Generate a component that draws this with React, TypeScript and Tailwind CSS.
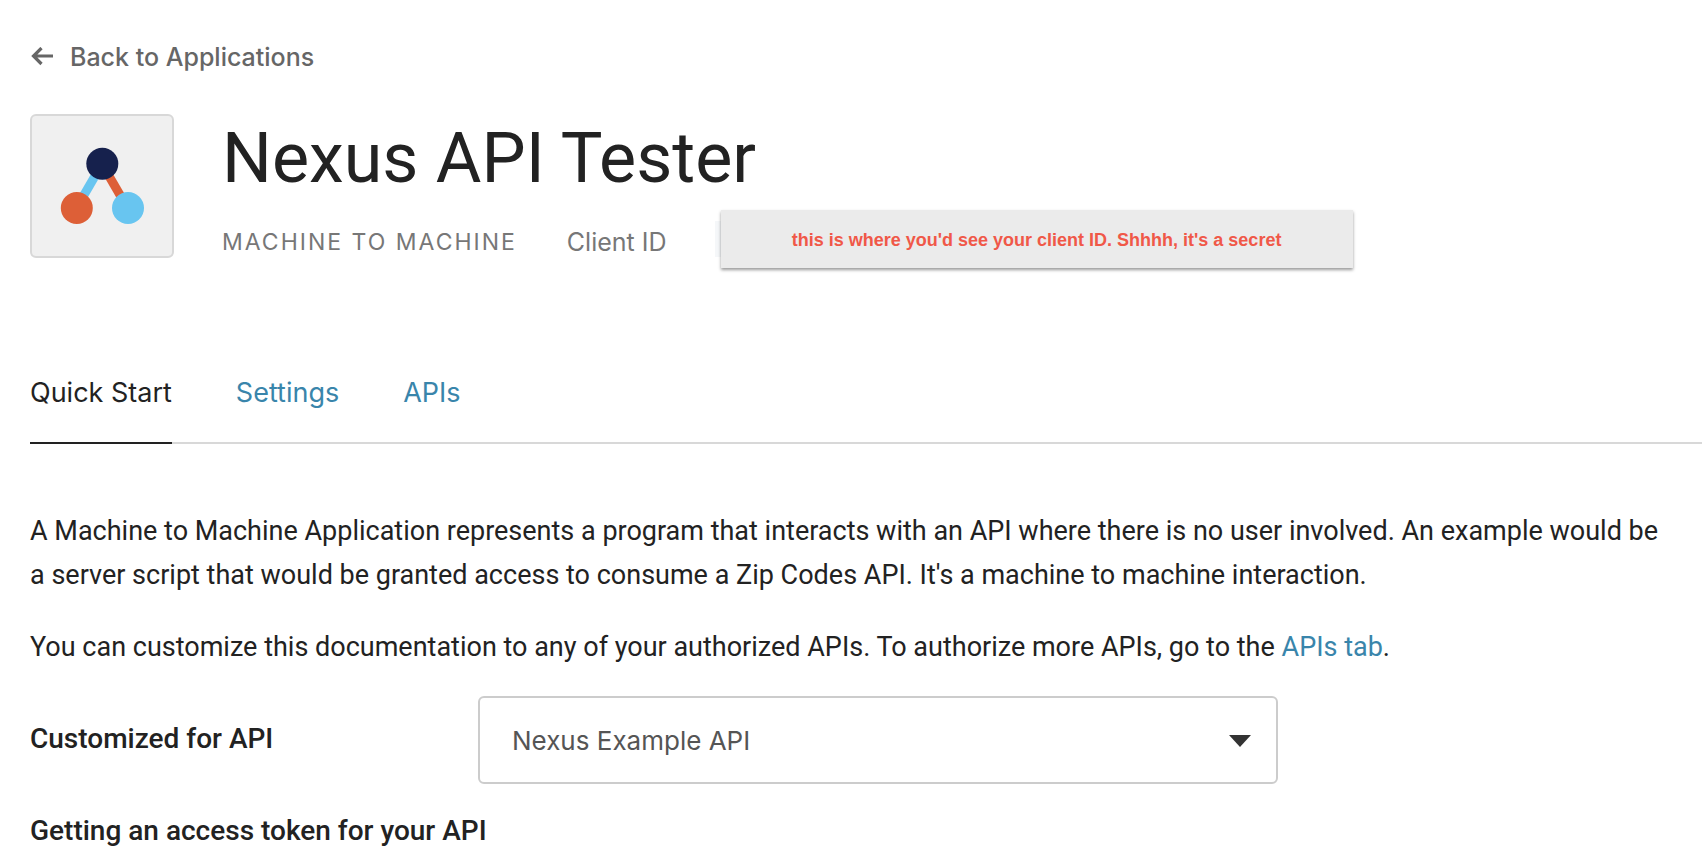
import React from "react";

const tabs = [
  { label: "Quick Start", href: "#quick-start", active: true },
  { label: "Settings", href: "#settings", active: false },
  { label: "APIs", href: "#apis", active: false },
];

function BackArrow() {
  return (
    <svg viewBox="0 0 24 20" className="h-5 w-6" fill="none" stroke="currentColor" strokeWidth="3.2" aria-hidden="true">
      <path d="M23 9H3.500M11.500 1L3.500 9L11.500 17" />
    </svg>
  );
}

function MachineLogo() {
  return (
    <svg viewBox="2 2 140 140" className="size-full" aria-hidden="true">
      <path d="M72 50L47 93" stroke="#68c5f0" strokeWidth="9" />
      <path d="M72 50L97 93" stroke="#dd5f37" strokeWidth="9" />
      <circle cx="72.300" cy="49.800" r="16" fill="#16214d" />
      <circle cx="46.800" cy="94" r="16" fill="#dd5f37" />
      <circle cx="98" cy="94" r="16" fill="#68c5f0" />
    </svg>
  );
}

export default function App() {
  return (
    <main className="min-h-screen bg-white pt-9 pb-1 pl-[30px] font-['Inter',sans-serif] text-[27px] leading-[44px] text-[#222]">
      <a href="#applications" className="flex w-fit items-center gap-4 text-[25px] leading-[42px] font-medium text-[#666]">
        <BackArrow />
        Back to Applications
      </a>

      <header className="mt-9 flex gap-12">
        <div className="size-36 shrink-0 overflow-hidden rounded-md border-2 border-[#d8d8d8] bg-[#f0f0f0]">
          <MachineLogo />
        </div>
        <div>
          <h1 className="pt-px font-['Roboto',sans-serif] text-[70px] leading-[86px]">Nexus API Tester</h1>
          <div className="mt-[9px] flex items-center text-[25px] text-[#777]">
            <span className="pt-1.5 text-[23px] tracking-[2px]">MACHINE TO MACHINE</span>
            <span className="ml-[50px] pt-1.5">Client ID</span>
            <div className="ml-12 rounded-md bg-[linear-gradient(#f5f7f9,#f5f7f9)] bg-[length:100%_36px] bg-center bg-no-repeat pl-1.5">
              <div className="w-[632px] bg-[#ebebeb] pt-0.5 text-center font-['Liberation_Sans',sans-serif] text-lg leading-[56px] font-bold text-[#f05848] shadow-[0_2px_3px_rgba(0,0,0,0.4)]">
                this is where you'd see your client ID. Shhhh, it's a secret
              </div>
            </div>
          </div>
        </div>
      </header>

      <nav className="mt-[91px] flex gap-16 border-b-2 border-[#d8d8d8]">
        {tabs.map((tab) => (
          <a
            key={tab.label}
            href={tab.href}
            className={
              tab.active
                ? "-mb-0.5 border-b-2 border-[#222] pt-3 pb-[27px]"
                : "pt-3 pb-[27px] text-[#3985ab]"
            }
          >
            {tab.label}
          </a>
        ))}
      </nav>

      <div className="pt-[65px] pr-6 font-['Roboto',sans-serif]">
        <p>
          A Machine to Machine Application represents a program that interacts with an API where there is no user involved. An example would be a server script that would be granted access to consume a Zip Codes API. It's a machine to machine interaction.
        </p>
        <p className="mt-7">
          You can customize this documentation to any of your authorized APIs. To authorize more APIs, go to the{" "}
          <a href="#apis" className="text-[#3985ab]">APIs tab</a>.
        </p>
      </div>

      <div className="mt-[27px] flex items-center">
        <label htmlFor="api" className="w-[448px] pb-0.5 font-['Roboto',sans-serif] text-[28px] font-medium">Customized for API</label>
        <div className="grid w-[800px] items-center">
          <select
            id="api"
            defaultValue="nexus"
            className="col-start-1 row-start-1 h-[88px] appearance-none rounded-md border-2 border-[#ccc] bg-white px-8 pt-0.5 text-[26px] text-[#555]"
          >
            <option value="nexus">Nexus Example API</option>
          </select>
          <svg viewBox="0 0 22 12" className="pointer-events-none col-start-1 row-start-1 mt-0.5 mr-[27px] h-3 w-[22px] justify-self-end" fill="#333" aria-hidden="true">
            <path d="M0 0H22L11 12Z" />
          </svg>
        </div>
      </div>

      <h2 className="mt-[25px] font-['Roboto',sans-serif] text-[28px] font-medium">Getting an access token for your API</h2>
    </main>
  );
}
